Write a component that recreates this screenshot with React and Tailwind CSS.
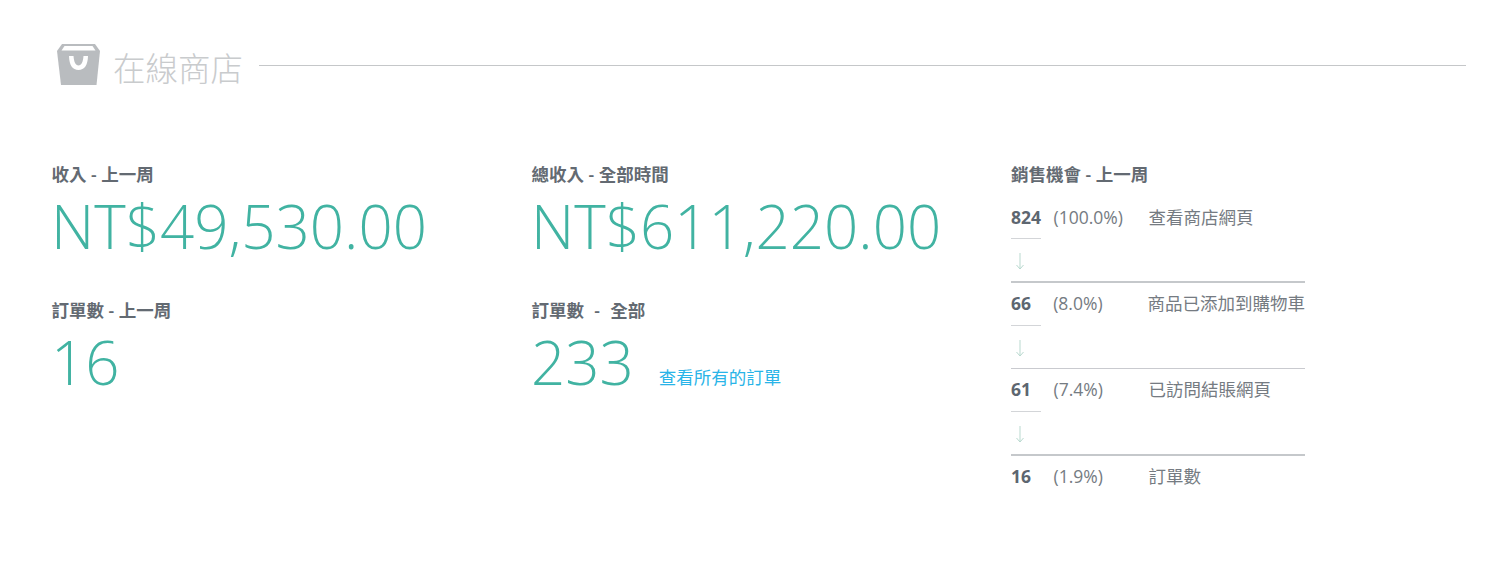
const font = { fontFamily: '"Open Sans", "Noto Sans CJK TC", sans-serif' };

function Stat({ label, value, children, labelClass = "" }) {
  return (
    <div className="ml-[-0.5px]">
      <div className={`text-[17.5px] leading-[19px] font-semibold text-[#636a72] whitespace-pre ${labelClass}`}>{label}</div>
      <div className="mt-[7px] flex items-end">
        <span className="text-[60px] leading-[70px] font-light text-[#41b3a2] ml-[-0.5px]">{value}</span>
        {children}
      </div>
    </div>
  );
}

function Arrow() {
  return (
    <div className="h-[42px] pt-[11px]">
      <svg width="10" height="20" viewBox="0 0 10 20" className="ml-[4px]" fill="none" stroke="#b9d9cf" strokeWidth="1">
        <path d="M5 3V19M1.500 15L5 19L8.500 15" />
      </svg>
    </div>
  );
}

function Row({ n, pct, label, first }) {
  return (
    <div className={`flex h-[42px] text-[17.5px] leading-[22px] text-[#757b82] ${first ? "pt-[10px]" : "pt-[9px]"}`}>
      <span className="w-[42.500px] font-bold text-[#5d6670]">{n}</span>
      <span className="w-[95px]">{pct}</span>
      <span className="whitespace-nowrap">{label}</span>
    </div>
  );
}

function Short() {
  return <div className="w-[30px] h-px bg-[#d3d5d8]" />;
}

export default function App() {
  return (
    <div className="w-[1498px] h-[562px] bg-white overflow-hidden" style={font}>
      <div className="flex items-center pl-[57px] pr-[32px] pt-[43px]">
        <svg width="43" height="43" viewBox="0 0 43 43" className="mt-[-10px]">
          <path fill="#b9bcbf" d="M5 1H38L43 8L39.500 42H4L0 8Z" />
          <path d="M4.500 7.500L7.500 3H35.500L38.500 7.500Z" fill="#ffffff" />
          <path fill="#ffffff" d="M12 13H16.500C17 19 18.500 22.500 21.500 22.500C24.500 22.500 26 19 26.500 13H31C30.800 22 27.500 27 21.500 27C15.500 27 12.200 22 12 13Z" />
        </svg>
        <span className="ml-[13px] text-[32.5px] leading-[52px] font-light text-[#c9cbcd]">在線商店</span>
        <div className="ml-[16px] flex-1 h-px bg-[#c5c7c9] mt-[-8px]" />
      </div>
      <div className="flex pl-[52px] pt-[70px]">
        <div className="w-[480px] flex flex-col gap-[40px]">
          <Stat label="收入 - 上一周" value="NT$49,530.00" />
          <Stat label="訂單數 - 上一周" value="16" />
        </div>
        <div className="w-[479px] flex flex-col gap-[40px]">
          <Stat label="總收入 - 全部時間" value="NT$611,220.00" />
          <Stat label="訂單數  -  全部" value="233" labelClass="[word-spacing:0.6px]">
            <span className="ml-[25px] mb-[8px] text-[17.5px] leading-[24px] text-[#29b4e8]">查看所有的訂單</span>
          </Stat>
        </div>
        <div className="w-[294px]">
          <div className="text-[17.5px] leading-[19px] font-semibold text-[#636a72]">銷售機會 - 上一周</div>
          <div className="mt-[12px]">
            <Row first n="824" pct="(100.0%)" label="查看商店網頁" />
            <Short />
            <Arrow />
            <div className="h-[2px] bg-[#c5c8cb]" />
            <Row n="66" pct="(8.0%)" label="商品已添加到購物車" />
            <Short />
            <Arrow />
            <div className="h-px bg-[#c9cacf]" />
            <Row n="61" pct="(7.4%)" label="已訪問結賬網頁" />
            <Short />
            <Arrow />
            <div className="h-[2px] bg-[#c5c8cb]" />
            <Row n="16" pct="(1.9%)" label="訂單數" />
          </div>
        </div>
      </div>
    </div>
  );
}
